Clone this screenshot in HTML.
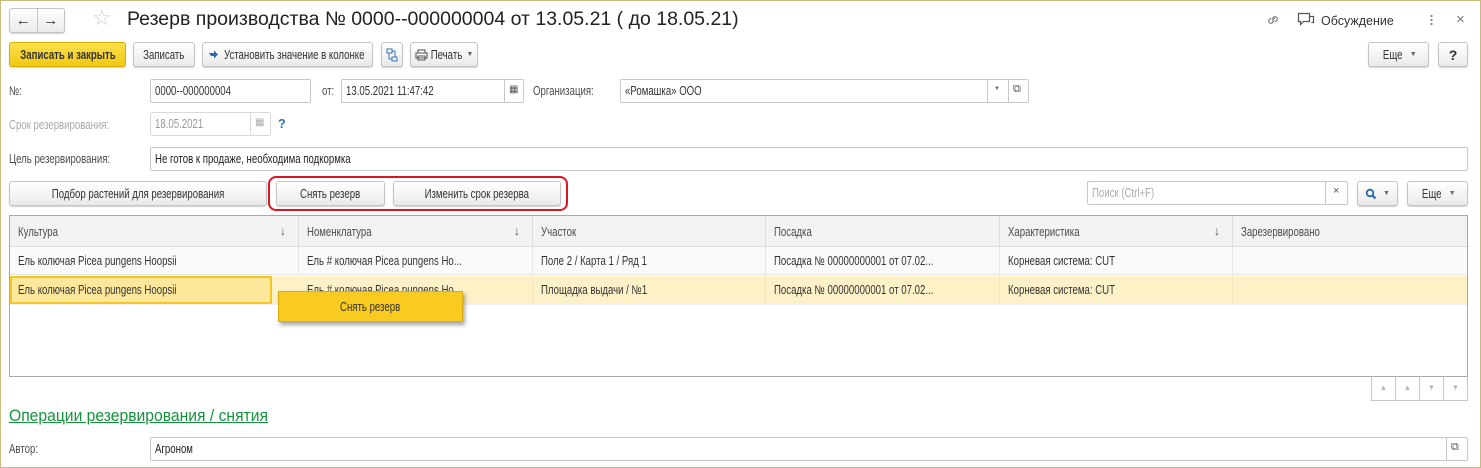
<!DOCTYPE html>
<html><head><meta charset="utf-8"><style>
*{box-sizing:border-box;margin:0;padding:0}
body{width:1481px;height:468px;overflow:hidden;background:#fff;font-family:"Liberation Sans",Arial,sans-serif;font-size:12.5px;color:#333;position:relative}
.frame{position:absolute;left:0;top:0;width:1481px;height:468px;border:1px solid #c9bc7e;pointer-events:none}
.a{position:absolute}
.s{display:inline-block;transform:scaleX(.77);transform-origin:left center;white-space:nowrap}
.c{display:inline-block;transform:scaleX(.77);transform-origin:center;white-space:nowrap}
.btn{position:absolute;height:25px;border:1px solid #c4c4c4;border-radius:3px;background:linear-gradient(#fff,#eaeaea);box-shadow:0 1px 1px rgba(0,0,0,.18);display:flex;align-items:center;justify-content:center;white-space:nowrap;color:#333}
.inp{position:absolute;height:24px;border:1px solid #c8c8c8;border-radius:2px;background:#fff;display:flex;align-items:center;padding-left:4px;white-space:nowrap;color:#333;overflow:hidden}
.lbl{position:absolute;white-space:nowrap;color:#4d4d4d}
.dd{font-size:7px;color:#666;margin-left:4px}
.th{position:absolute;top:216px;height:31px;border-right:1px solid #dcdcdc;padding-left:8px;display:flex;align-items:center;color:#4d4d4d;background:#f2f2f2}
.td{position:absolute;height:28px;padding-left:8px;display:flex;align-items:center;white-space:nowrap;border-right:1px solid #e6e6e6;overflow:hidden}
.arr{position:absolute;right:12px;top:8px;font-size:12px;color:#555}
</style></head><body>

<div class="btn" style="left:9px;top:8px;width:56px;height:25px"><span style="width:27px;text-align:center;font-size:15px">&#x2190;</span><span style="width:1px;height:23px;background:#c8c8c8"></span><span style="width:27px;text-align:center;font-size:15px">&#x2192;</span></div>
<div class="a" style="left:92px;top:5px;font-size:22px;color:#d0d0d0">&#x2606;</div>
<div class="a" style="left:127px;top:8px;font-size:19.5px;color:#222;white-space:nowrap">Резерв производства № 0000--000000004 от 13.05.21 ( до 18.05.21)</div>
<svg class="a" style="left:1265px;top:12px" width="16" height="16" viewBox="0 0 16 16"><path d="M7 9l3-3M6 6l-2 2a2.2 2.2 0 0 0 3 3l2-2M10 10l2-2a2.2 2.2 0 0 0-3-3L7 7" fill="none" stroke="#777" stroke-width="1.1"/></svg>
<svg class="a" style="left:1297px;top:12px" width="18" height="16" viewBox="0 0 18 16"><path d="M1.5 1.5h11v8h-6l-3 3v-3h-2z" fill="none" stroke="#555" stroke-width="1.2"/><path d="M12.5 4.5h4v6h-2" fill="none" stroke="#555" stroke-width="1.2"/></svg>
<div class="lbl" style="left:1321px;top:14px;color:#333">Обсуждение</div>
<div class="a" style="left:1430px;top:14px;width:3px;height:12px;background:radial-gradient(circle,#888 1px,transparent 1.3px) 0 0/3px 4px"></div>
<div class="a" style="left:1456px;top:11px;font-size:15px;color:#777">×</div>

<div class="btn" style="left:9px;top:42px;width:117px;background:linear-gradient(#fbe04c,#f2c811);border-color:#d8ac00;font-weight:bold;color:#333"><span class="c">Записать и закрыть</span></div>
<div class="btn" style="left:133px;top:42px;width:62px"><span class="c">Записать</span></div>
<div class="btn" style="left:202px;top:42px;width:171px"><svg width="12" height="12" viewBox="0 0 12 12" style="margin-right:2px"><path d="M2 4h5v-2.5l4 4-4 4v-2.5h-3z" fill="#2c6aa8"/></svg><span class="c" style="margin:0 -18px">Установить значение в колонке</span></div>
<div class="btn" style="left:381px;top:42px;width:22px"><svg width="12" height="14" viewBox="0 0 12 14"><path d="M1 1h5v4H1zM6 9h5v4H6zM3 5v6h3M6 3h3v6" fill="none" stroke="#3a78b5" stroke-width="1"/></svg></div>
<div class="btn" style="left:410px;top:42px;width:68px"><svg width="13" height="12" viewBox="0 0 13 12" style="margin-right:2px"><path d="M3 1h7v3H3zM1 4h11v5H1zM3 7h7v4H3z" fill="#fff" stroke="#555" stroke-width="1.1"/></svg><span class="c" style="margin:0 -4px">Печать</span><span class="dd">&#x25BC;</span></div>
<div class="btn" style="left:1368px;top:42px;width:61px"><span class="c">Еще</span><span class="dd">&#x25BC;</span></div>
<div class="btn" style="left:1438px;top:42px;width:30px;font-weight:bold;font-size:14px">?</div>

<div class="lbl" style="left:9px;top:84px"><span class="s">№:</span></div>
<div class="inp" style="left:150px;top:79px;width:161px"><span class="s">0000--000000004</span></div>
<div class="lbl" style="left:322px;top:84px"><span class="s">от:</span></div>
<div class="inp" style="left:341px;top:79px;width:183px"><span class="s">13.05.2021 11:47:42</span></div>
<div class="a" style="left:504px;top:80px;width:1px;height:22px;background:#c8c8c8"></div>
<div class="a" style="left:509px;top:84px;font-size:10px;color:#555">&#x25A6;</div>
<div class="lbl" style="left:533px;top:84px"><span class="s">Организация:</span></div>
<div class="inp" style="left:620px;top:79px;width:409px"><span class="s">«Ромашка» ООО</span></div>
<div class="a" style="left:987px;top:80px;width:1px;height:22px;background:#c8c8c8"></div>
<div class="a" style="left:994px;top:86px;font-size:6px;color:#666">&#x25BC;</div>
<div class="a" style="left:1008px;top:80px;width:1px;height:22px;background:#c8c8c8"></div>
<div class="a" style="left:1013px;top:83px;font-size:11px;color:#555">&#x29C9;</div>

<div class="lbl" style="left:9px;top:118px;color:#a8a8a8"><span class="s">Срок резервирования:</span></div>
<div class="inp" style="left:150px;top:112px;width:121px;color:#999;border-color:#dadada"><span class="s">18.05.2021</span></div>
<div class="a" style="left:250px;top:113px;width:1px;height:22px;background:#dadada"></div>
<div class="a" style="left:255px;top:117px;font-size:10px;color:#aaa">&#x25A6;</div>
<div class="a" style="left:278px;top:117px;color:#2a6fb6;font-weight:bold">?</div>

<div class="lbl" style="left:9px;top:152px"><span class="s">Цель резервирования:</span></div>
<div class="inp" style="left:150px;top:147px;width:1318px;color:#222"><span class="s">Не готов к продаже, необходима подкормка</span></div>

<div class="btn" style="left:9px;top:181px;width:258px"><span class="c">Подбор растений для резервирования</span></div>
<div class="btn" style="left:276px;top:181px;width:109px"><span class="c">Снять резерв</span></div>
<div class="btn" style="left:393px;top:181px;width:168px"><span class="c">Изменить срок резерва</span></div>
<div class="a" style="left:268px;top:176px;width:300px;height:35px;border:2px solid #e0141e;border-radius:8px"></div>
<div class="inp" style="left:1087px;top:181px;width:261px;color:#aaa"><span class="s">Поиск (Ctrl+F)</span></div>
<div class="a" style="left:1325px;top:182px;width:1px;height:22px;background:#c8c8c8"></div>
<div class="a" style="left:1333px;top:185px;font-size:11px;color:#555">×</div>
<div class="btn" style="left:1357px;top:181px;width:41px"><svg width="12" height="12" viewBox="0 0 12 12"><circle cx="5" cy="5" r="3.3" fill="none" stroke="#2c6aa8" stroke-width="1.8"/><path d="M7.5 7.5l3 3" stroke="#2c6aa8" stroke-width="2.2"/></svg><span class="dd" style="margin-left:6px">&#x25BC;</span></div>
<div class="btn" style="left:1407px;top:181px;width:61px"><span class="c">Еще</span><span class="dd">&#x25BC;</span></div>

<div class="a" style="left:9px;top:215px;width:1459px;height:162px;border:1px solid #a8a8a8;background:#fff"></div>
<div class="th" style="left:10px;width:289px"><span class="s">Культура</span><span class="arr">&#x2193;</span></div>
<div class="th" style="left:299px;width:234px"><span class="s">Номенклатура</span><span class="arr">&#x2193;</span></div>
<div class="th" style="left:533px;width:233px"><span class="s">Участок</span></div>
<div class="th" style="left:766px;width:234px"><span class="s">Посадка</span></div>
<div class="th" style="left:1000px;width:233px"><span class="s">Характеристика</span><span class="arr">&#x2193;</span></div>
<div class="th" style="left:1233px;width:234px;border-right:none"><span class="s">Зарезервировано</span></div>
<div class="a" style="left:10px;top:246px;width:1457px;height:1px;background:#dcdcdc"></div>

<div class="a" style="left:10px;top:247px;width:1457px;height:28px;background:#fafafa;border-bottom:1px solid #e4e4e4"></div>
<div class="td" style="left:10px;top:247px;width:289px"><span class="s">Ель колючая Picea pungens Hoopsii</span></div>
<div class="td" style="left:299px;top:247px;width:234px"><span class="s">Ель # колючая Picea pungens Ho...</span></div>
<div class="td" style="left:533px;top:247px;width:233px"><span class="s">Поле 2 / Карта 1 / Ряд 1</span></div>
<div class="td" style="left:766px;top:247px;width:234px"><span class="s">Посадка № 00000000001 от 07.02...</span></div>
<div class="td" style="left:1000px;top:247px;width:233px"><span class="s">Корневая система: CUT</span></div>

<div class="a" style="left:10px;top:276px;width:1457px;height:29px;background:#fdf1c8;border-bottom:1px solid #eee"></div>
<div class="td" style="left:10px;top:276px;width:262px;background:#fde79a;border:2px solid #f3c623;padding-left:6px"><span class="s">Ель колючая Picea pungens Hoopsii</span></div>
<div class="td" style="left:299px;top:276px;width:234px;border-right:1px solid #f2e6bf"><span class="s">Ель # колючая Picea pungens Ho...</span></div>
<div class="td" style="left:533px;top:276px;width:233px;border-right:1px solid #f2e6bf"><span class="s">Площадка выдачи / №1</span></div>
<div class="td" style="left:766px;top:276px;width:234px;border-right:1px solid #f2e6bf"><span class="s">Посадка № 00000000001 от 07.02...</span></div>
<div class="td" style="left:1000px;top:276px;width:233px;border-right:1px solid #f2e6bf"><span class="s">Корневая система: CUT</span></div>

<div class="a" style="left:278px;top:291px;width:185px;height:31px;background:#f9cb20;border:1px solid #d9ad12;box-shadow:2px 3px 4px rgba(0,0,0,.35);display:flex;align-items:center;justify-content:center;color:#333"><span class="c">Снять резерв</span></div>

<div class="a" style="left:1371px;top:377px;width:97px;height:24px;border:1px solid #c8c8c8;border-top:none;display:flex">
<span style="flex:1;border-right:1px solid #c8c8c8;text-align:center;font-size:8px;color:#bbb;line-height:22px">&#x25B2;</span>
<span style="flex:1;border-right:1px solid #c8c8c8;text-align:center;font-size:8px;color:#bbb;line-height:22px">&#x25B2;</span>
<span style="flex:1;border-right:1px solid #c8c8c8;text-align:center;font-size:8px;color:#bbb;line-height:22px">&#x25BC;</span>
<span style="flex:1;text-align:center;font-size:8px;color:#bbb;line-height:22px">&#x25BC;</span></div>

<div class="a" style="left:9px;top:407px;font-size:16.5px;color:#14933c;white-space:nowrap"><span class="s" style="transform:scaleX(.95);text-decoration:underline">Операции резервирования / снятия</span></div>

<div class="lbl" style="left:9px;top:442px"><span class="s">Автор:</span></div>
<div class="inp" style="left:150px;top:437px;width:1318px;color:#222"><span class="s">Агроном</span></div>
<div class="a" style="left:1446px;top:438px;width:1px;height:22px;background:#c8c8c8"></div>
<div class="a" style="left:1451px;top:441px;font-size:11px;color:#555">&#x29C9;</div>

<div class="frame"></div>
</body></html>
